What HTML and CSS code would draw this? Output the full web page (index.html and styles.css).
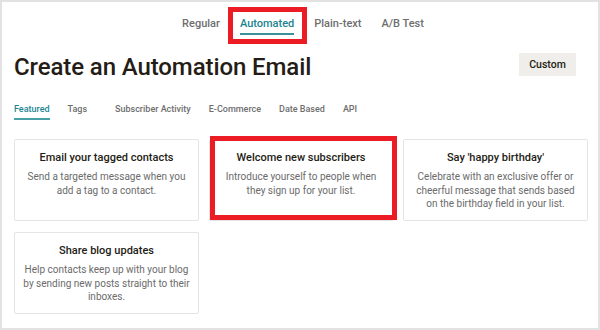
FILE: index.html
```html
<!DOCTYPE html>
<html lang="en">

<head>
    <meta charset="UTF-8">
    <title>Create an Automation Email</title>
    <link rel="stylesheet" href="styles.css">
</head>

<body>
    <div class="frame">
        <nav class="type-tabs">
            <span class="type-tab">Regular</span>
            <span class="type-tab active marked">Automated</span>
            <span class="type-tab">Plain-text</span>
            <span class="type-tab">A/B Test</span>
        </nav>

        <div class="header">
            <h1>Create an Automation Email</h1>
            <button class="btn-custom">Custom</button>
        </div>

        <nav class="sub-tabs">
            <span class="sub-tab active">Featured</span>
            <span class="sub-tab wide">Tags</span>
            <span class="sub-tab">Subscriber Activity</span>
            <span class="sub-tab">E-Commerce</span>
            <span class="sub-tab">Date Based</span>
            <span class="sub-tab">API</span>
        </nav>

        <div class="cards">
            <div class="card">
                <h3>Email your tagged contacts</h3>
                <p>Send a targeted message when you add a tag to a contact.</p>
            </div>
            <div class="card marked">
                <h3>Welcome new subscribers</h3>
                <p>Introduce yourself to people when they sign up for your list.</p>
            </div>
            <div class="card">
                <h3>Say 'happy birthday'</h3>
                <p>Celebrate with an exclusive offer or cheerful message that sends based on the birthday field in your list.</p>
            </div>
            <div class="card">
                <h3>Share blog updates</h3>
                <p>Help contacts keep up with your blog by sending new posts straight to their inboxes.</p>
            </div>
        </div>
    </div>
</body>

</html>
```

FILE: styles.css
```css
body {
    margin: 0;
    font-family: Roboto, "Noto Sans", sans-serif;
    background-color: #fff;
}

.frame {
    box-sizing: border-box;
    width: 600px;
    height: 330px;
    padding: 14px 10px 0 12px;
    border: 2px solid #e2e2e2;
    background-color: #fff;
}

/* top tabs */
.type-tabs {
    display: flex;
    justify-content: center;
    gap: 20px;
    padding-left: 4px;
}

.type-tab {
    font-size: 11px;
    line-height: 16px;
    font-weight: 500;
    color: #6e6e6e;
    padding-bottom: 1px;
    border-bottom: 2px solid transparent;
}

.type-tab.active {
    color: #1c8490;
    border-bottom-color: #3a9299;
}

/* red annotation boxes */
.marked {
    position: relative;
}

.type-tab.marked::after {
    content: "";
    position: absolute;
    top: -9px;
    left: -12px;
    right: -13px;
    bottom: -11px;
    border: 5px solid #ec1c24;
}

.card.marked::after {
    content: "";
    position: absolute;
    top: -4px;
    left: 0;
    right: -4px;
    bottom: 0;
    border: 5px solid #ec1c24;
}

.header {
    display: flex;
    justify-content: space-between;
    align-items: flex-start;
    margin-top: 17px;
    padding-right: 12px;
}

h1 {
    margin: 0;
    font-size: 24px;
    line-height: 30px;
    font-weight: 500;
    color: #241c15;
    letter-spacing: -0.1px;
}

.btn-custom {
    margin-top: 1px;
    width: 57px;
    height: 23px;
    padding: 0;
    border: none;
    background-color: #efeeea;
    font-family: inherit;
    font-size: 10.5px;
    font-weight: 500;
    color: #241c15;
}

/* sub tabs */
.sub-tabs {
    display: flex;
    gap: 18px;
    margin-top: 20px;
}

.sub-tab {
    font-size: 9px;
    line-height: 14px;
    font-weight: 500;
    color: #6e6e6e;
    padding-bottom: 2px;
    border-bottom: 2px solid transparent;
}

.sub-tab.wide {
    margin-right: 10px;
}

.sub-tab.active {
    color: #1c8490;
    border-bottom-color: #46a0a6;
}

/* cards */
.cards {
    display: grid;
    grid-template-columns: repeat(3, 185px);
    grid-auto-rows: 82px;
    column-gap: 9.5px;
    row-gap: 11px;
    margin-top: 19px;
}

.card {
    box-sizing: border-box;
    padding: 10px 7px 0;
    border: 1px solid #e4e4e4;
    border-radius: 2px;
    text-align: center;
}

.card h3 {
    margin: 0;
    font-size: 11px;
    line-height: 16px;
    font-weight: 500;
    color: #241c15;
}

.card p {
    margin: 4px 0 0;
    font-size: 10px;
    line-height: 13.5px;
    color: #6b6b6b;
}
```
